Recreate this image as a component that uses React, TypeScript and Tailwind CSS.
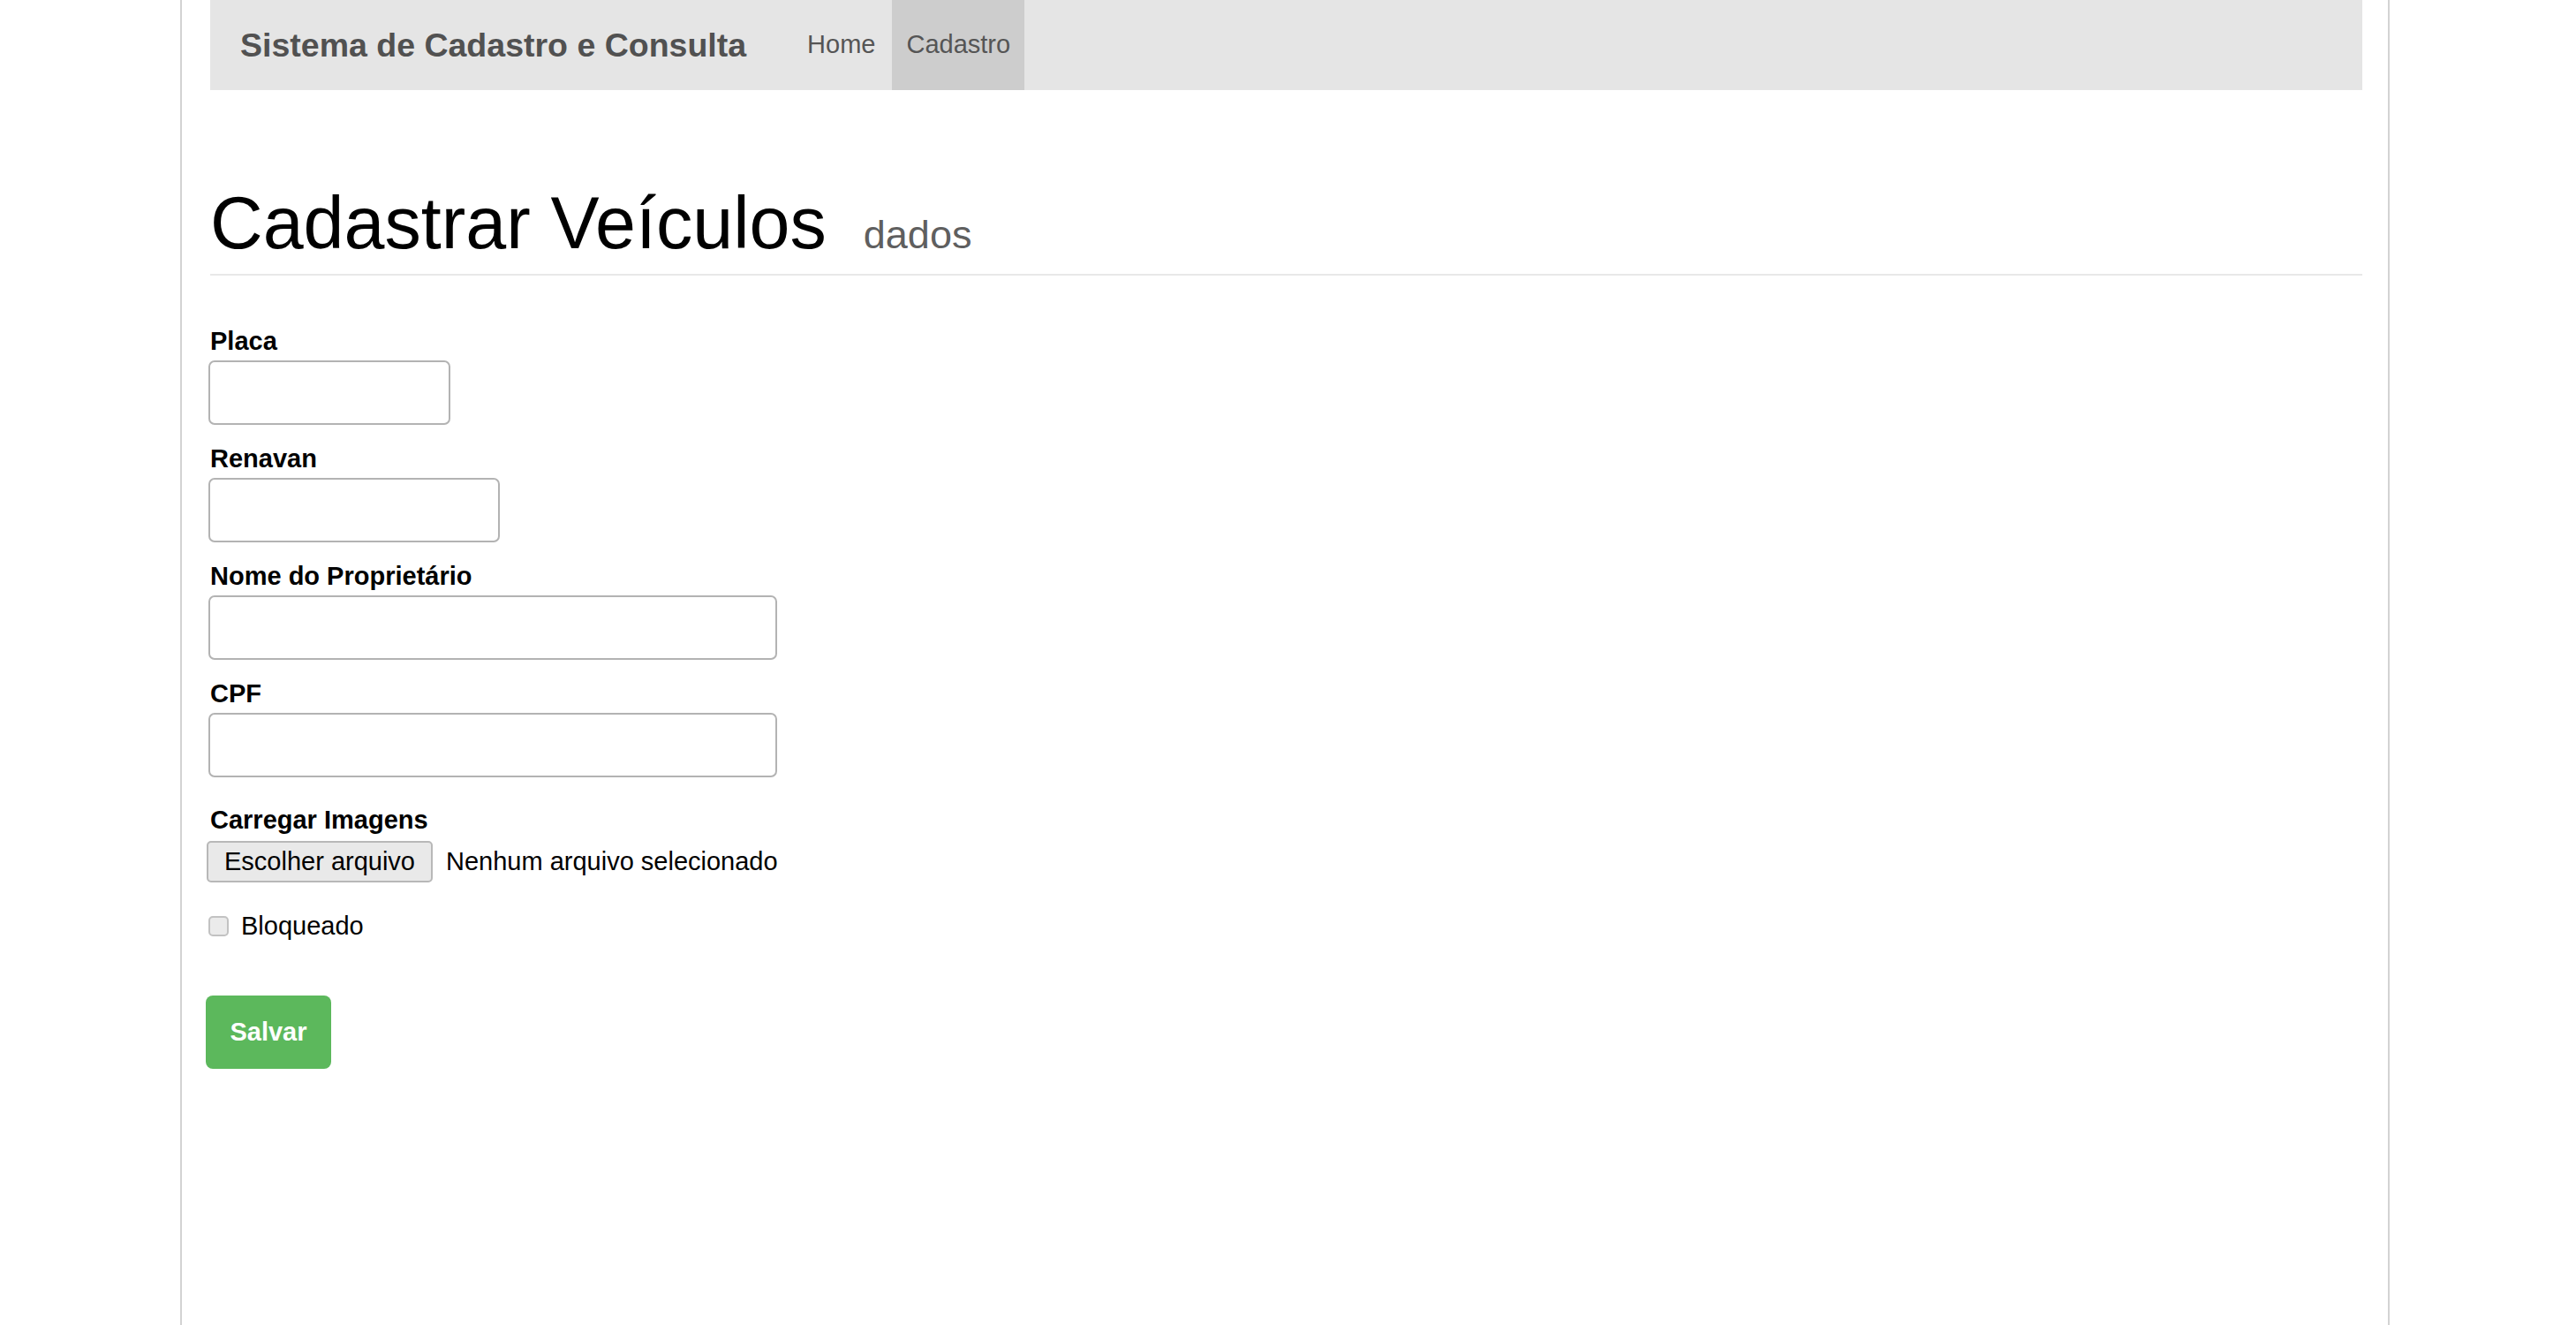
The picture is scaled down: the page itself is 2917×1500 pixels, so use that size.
const fields = [
  { label: "Placa", width: "w-[274px]" },
  { label: "Renavan", width: "w-[330px]" },
  { label: "Nome do Proprietário", width: "w-[644px]" },
  { label: "CPF", width: "w-[644px]" },
];

export default function App() {
  return (
    <div
      className="min-h-screen bg-white text-black"
      style={{ fontFamily: '"Liberation Sans", Arial, Helvetica, sans-serif' }}
    >
      <div className="ml-[204px] w-[2502px] min-h-screen border-x-2 border-[#d3d3d3] pl-[32px] pr-[29px]">
        {/* Navbar */}
        <nav className="flex h-[102px] items-stretch bg-[#e5e5e5]">
          <div className="flex items-center pl-[34px] text-[37.5px] font-bold text-[#515151]">
            Sistema de Cadastro e Consulta
          </div>
          <a className="ml-[52px] flex items-center pl-[17px] pr-[19px] text-[29px] text-[#555]">
            Home
          </a>
          <a className="flex items-center bg-[#cdcdcd] px-[16px] text-[29px] text-[#555]">
            Cadastro
          </a>
        </nav>

        {/* Page header */}
        <div className="mt-[106px] flex items-baseline border-b-2 border-[#e8e8e8] pb-[11px]">
          <h1 className="text-[82.6px] font-normal leading-[1.1]">Cadastrar Veículos</h1>
          <span className="ml-[42px] text-[45px] leading-none text-[#5f5f5f]">dados</span>
        </div>

        {/* Form */}
        <form className="mt-[54px]">
          {fields.map((f, i) => (
            <div key={f.label} className={i === fields.length - 1 ? "mb-[28px]" : "mb-[18px]"}>
              <label className="mb-[2px] block text-[29px] font-bold leading-[40px]">{f.label}</label>
              <input
                type="text"
                className={`-ml-[2px] block h-[73px] ${f.width} rounded-[7px] border-2 border-[#b3b3b3] bg-white px-3 outline-none`}
              />
            </div>
          ))}

          <label className="mb-[4px] block text-[29px] font-bold leading-[40px]">Carregar Imagens</label>
          <div className="-ml-[4px] flex items-center">
            <span className="flex h-[47px] items-center rounded-[5px] border-2 border-[#b8b8b8] bg-[#e9e9e9] px-[18px] text-[29px]">
              Escolher arquivo
            </span>
            <span className="ml-[15px] text-[29px]">Nenhum arquivo selecionado</span>
          </div>

          <div className="mt-[30px] flex h-[40px] items-center">
            <span className="-ml-[2px] h-[23px] w-[23px] rounded-[5px] border-2 border-[#c2c2c2] bg-[#ebebeb]" />
            <span className="ml-[14px] text-[29px]">Bloqueado</span>
          </div>

          <button
            type="button"
            className="-ml-[5px] mt-[58px] flex h-[83px] w-[142px] items-center justify-center rounded-[8px] bg-[#5cb85c] text-[29px] font-bold text-white"
          >
            Salvar
          </button>
        </form>
      </div>
    </div>
  );
}
